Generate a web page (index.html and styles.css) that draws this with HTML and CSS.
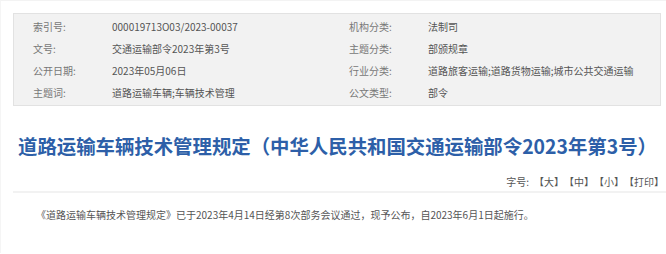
FILE: index.html
```html
<!DOCTYPE html>
<html lang="zh-CN">
<head>
    <meta charset="UTF-8">
    <meta name="viewport" content="width=device-width, initial-scale=1.0">
    <title>道路运输车辆技术管理规定</title>
    <link rel="stylesheet" href="styles.css">
</head>
<body>
    <div class="page">
        <div class="meta">
            <div class="meta-item"><span class="label">索引号:</span><span class="value">000019713O03/2023-00037</span></div>
            <div class="meta-item"><span class="label">机构分类:</span><span class="value">法制司</span></div>
            <div class="meta-item"><span class="label">文号:</span><span class="value">交通运输部令2023年第3号</span></div>
            <div class="meta-item"><span class="label">主题分类:</span><span class="value">部颁规章</span></div>
            <div class="meta-item"><span class="label">公开日期:</span><span class="value">2023年05月06日</span></div>
            <div class="meta-item"><span class="label">行业分类:</span><span class="value">道路旅客运输;道路货物运输;城市公共交通运输</span></div>
            <div class="meta-item"><span class="label">主题词:</span><span class="value">道路运输车辆;车辆技术管理</span></div>
            <div class="meta-item"><span class="label">公文类型:</span><span class="value">部令</span></div>
        </div>

        <h1 class="title">道路运输车辆技术管理规定（中华人民共和国交通运输部令2023年第3号）</h1>

        <div class="tools">
            字号:<a href="#">【大】</a><a href="#">【中】</a><a href="#">【小】</a><a href="#">【打印】</a>
        </div>

        <div class="content">
            <p>《道路运输车辆技术管理规定》已于2023年4月14日经第8次部务会议通过，现予公布，自2023年6月1日起施行。</p>
        </div>
    </div>
</body>
</html>
```

FILE: styles.css
```css
body {
    margin: 0;
    padding: 0;
    background-color: #fff;
    font-family: "Noto Sans CJK SC", "Noto Sans", sans-serif;
    color: #555;
}
.page {
    border-top: 1px solid #f3f3f3;
    border-left: 1px solid #f5f5f5;
    padding: 12px 0 0 12px;
    min-height: 240px;
}
.meta {
    width: 648px;
    background-color: #f2f2f2;
    border: 1px solid #e2e2e2;
    padding: 2px 0 1px 19px;
    box-sizing: border-box;
    display: grid;
    grid-template-columns: 316px 1fr;
}
.meta-item {
    display: flex;
    font-size: 10px;
    line-height: 22px;
}
.label {
    width: 79px;
    color: #777;
}
.value {
    color: #555;
}
.title {
    margin: 26px 0 0 5px;
    font-size: 19.4px;
    line-height: 28px;
    font-weight: bold;
    color: #2d5fa8;
    white-space: nowrap;
}
.tools {
    margin-top: 14px;
    padding-right: 2px;
    font-size: 10px;
    line-height: 16px;
    text-align: right;
    color: #555;
    padding-bottom: 1px;
    border-bottom: 2px solid #f2f2f2;
}
.tools a {
    margin-left: 5px;
    color: #555;
    text-decoration: none;
}
.content {
    padding: 12px 0 0 3px;
}
.content p {
    margin: 0;
    font-size: 10px;
    line-height: 20px;
    text-indent: 2em;
    color: #555;
}
```
